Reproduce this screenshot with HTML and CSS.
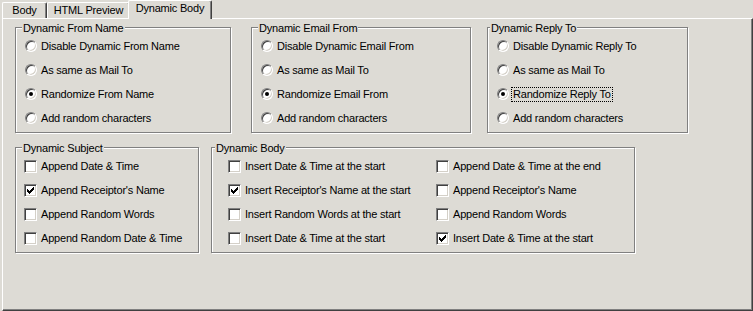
FILE: index.html
```html
<!DOCTYPE html>
<html lang="en">
<head>
    <meta charset="UTF-8">
    <meta name="viewport" content="width=device-width, initial-scale=1.0">
    <title>Dynamic Body</title>
    <link rel="stylesheet" href="styles.css">
</head>
<body>

    <div class="window">
        <div class="tabs">
            <div class="tab tab-body">Body</div>
            <div class="tab tab-html">HTML Preview</div>
            <div class="tab tab-dynamic active">Dynamic Body</div>
        </div>

        <div class="panel">
            <div class="group-row">
                <div class="group group-from">
                    <span class="group-title">Dynamic From Name</span>
                    <div class="option"><span class="radio"></span><span>Disable Dynamic From Name</span></div>
                    <div class="option"><span class="radio"></span><span>As same as Mail To</span></div>
                    <div class="option"><span class="radio checked"></span><span>Randomize From Name</span></div>
                    <div class="option"><span class="radio"></span><span>Add random characters</span></div>
                </div>

                <div class="group group-email">
                    <span class="group-title">Dynamic Email From</span>
                    <div class="option"><span class="radio"></span><span>Disable Dynamic Email From</span></div>
                    <div class="option"><span class="radio"></span><span>As same as Mail To</span></div>
                    <div class="option"><span class="radio checked"></span><span>Randomize Email From</span></div>
                    <div class="option"><span class="radio"></span><span>Add random characters</span></div>
                </div>

                <div class="group group-reply">
                    <span class="group-title">Dynamic Reply To</span>
                    <div class="option"><span class="radio"></span><span>Disable Dynamic Reply To</span></div>
                    <div class="option"><span class="radio"></span><span>As same as Mail To</span></div>
                    <div class="option"><span class="radio checked"></span><span class="focus">Randomize Reply To</span></div>
                    <div class="option"><span class="radio"></span><span>Add random characters</span></div>
                </div>
            </div>

            <div class="group-row second">
                <div class="group group-subject">
                    <span class="group-title">Dynamic Subject</span>
                    <div class="option"><span class="check"></span><span>Append Date &amp; Time</span></div>
                    <div class="option"><span class="check"><svg viewBox="0 0 7 7" width="7" height="7"><path d="M0 2h1v1h1v1h1v-1h1v-1h1v-1h1v-1h1v3h-1v1h-1v1h-1v1h-1v1h-1v-1h-1v-1h-1z"/></svg></span><span>Append Receiptor's Name</span></div>
                    <div class="option"><span class="check"></span><span>Append Random Words</span></div>
                    <div class="option"><span class="check"></span><span>Append Random Date &amp; Time</span></div>
                </div>

                <div class="group group-body">
                    <span class="group-title">Dynamic Body</span>
                    <div class="check-grid">
                        <div class="option"><span class="check"></span><span>Insert Date &amp; Time at the start</span></div>
                        <div class="option"><span class="check"></span><span>Append Date &amp; Time at the end</span></div>
                        <div class="option"><span class="check"><svg viewBox="0 0 7 7" width="7" height="7"><path d="M0 2h1v1h1v1h1v-1h1v-1h1v-1h1v-1h1v3h-1v1h-1v1h-1v1h-1v1h-1v-1h-1v-1h-1z"/></svg></span><span>Insert Receiptor's Name at the start</span></div>
                        <div class="option"><span class="check"></span><span>Append Receiptor's Name</span></div>
                        <div class="option"><span class="check"></span><span>Insert Random Words at the start</span></div>
                        <div class="option"><span class="check"></span><span>Append Random Words</span></div>
                        <div class="option"><span class="check"></span><span>Insert Date &amp; Time at the start</span></div>
                        <div class="option"><span class="check"><svg viewBox="0 0 7 7" width="7" height="7"><path d="M0 2h1v1h1v1h1v-1h1v-1h1v-1h1v-1h1v3h-1v1h-1v1h-1v1h-1v1h-1v-1h-1v-1h-1z"/></svg></span><span>Insert Date &amp; Time at the start</span></div>
                    </div>
                </div>
            </div>
        </div>
    </div>

</body>
</html>
```

FILE: styles.css
```css
body {
    margin: 0;
    padding: 0;
    background: #dddbd5;
    font-family: 'Liberation Sans', Arial, sans-serif;
    font-size: 11px;
    letter-spacing: -0.2px;
    color: #000;
}

.window {
    width: 753px;
    height: 311px;
    padding-left: 2px;
    box-sizing: border-box;
    display: flex;
    flex-direction: column;
    background: #dddbd5;
}

/* tab strip */
.tabs {
    display: flex;
    align-items: flex-end;
    height: 18px;
    flex-shrink: 0;
}

.tab {
    height: 16px;
    box-sizing: border-box;
    padding-top: 1px;
    line-height: 13px;
    text-align: center;
    border-top: 1px solid #fff;
    border-left: 1px solid #fff;
    border-right: 1px solid #404040;
    border-radius: 2px 2px 0 0;
    box-shadow: inset -1px 0 #808080;
    background: #dddbd5;
}

.tab-body { width: 45px; }
.tab-html { width: 83px; }
.tab-dynamic { width: 80px; }

.tab.active {
    height: 19px;
    width: 84px;
    padding-top: 1px;
    margin-left: -2px;
    margin-bottom: -1px;
    position: relative;
    z-index: 1;
}

/* page area */
.panel {
    flex: 1;
    box-sizing: border-box;
    padding: 8px 0 0 12px;
    border-top: 1px solid #fff;
    border-left: 1px solid #fff;
    border-right: 1px solid #404040;
    border-bottom: 1px solid #404040;
    box-shadow: inset -1px -1px #808080;
}

.group-row {
    display: flex;
}

.group-row.second {
    margin-top: 14px;
}

.group {
    position: relative;
    box-sizing: border-box;
    height: 106px;
    padding: 6px 0 2px 8px;
    border: 1px solid #808080;
    box-shadow: inset 1px 1px #fff, 1px 1px #fff;
}

.group-title {
    position: absolute;
    top: -6px;
    left: 6px;
    padding: 0 1px;
    line-height: 13px;
    background: #dddbd5;
}

.group-from { width: 216px; }
.group-email { width: 220px; margin-left: 20px; }
.group-reply { width: 201px; margin-left: 16px; }
.group-reply .group-title { left: 2px; }

.group-subject { width: 184px; }
.group-body { width: 424px; margin-left: 12px; padding-left: 16px; }
.group-body .group-title { left: 3px; }

.check-grid {
    display: grid;
    grid-template-columns: 208px 208px;
}

.option {
    display: flex;
    align-items: center;
    height: 24px;
    line-height: 13px;
    white-space: nowrap;
}

/* radio button */
.radio {
    position: relative;
    width: 12px;
    height: 12px;
    margin-left: 1px;
    margin-right: 4px;
    box-sizing: border-box;
    border-radius: 50%;
    background: #fff;
    border: 1px solid;
    border-color: #808080 #fff #fff #808080;
    box-shadow: inset 1px 1px #404040, inset -1px -1px #d4d0c8;
    flex-shrink: 0;
}

.radio.checked::after {
    content: '';
    position: absolute;
    left: 3px;
    top: 3px;
    width: 4px;
    height: 4px;
    border-radius: 50%;
    background: #000;
}

/* checkbox */
.check {
    display: flex;
    align-items: center;
    justify-content: center;
    width: 13px;
    height: 13px;
    margin-right: 4px;
    box-sizing: border-box;
    background: #fff;
    border: 1px solid;
    border-color: #808080 #fff #fff #808080;
    box-shadow: inset 1px 1px #404040, inset -1px -1px #d4d0c8;
    flex-shrink: 0;
}

.check svg {
    fill: #000;
    shape-rendering: crispEdges;
}

.focus {
    outline: 1px dotted #000;
    padding: 0 1px;
    margin-left: -1px;
}
```
